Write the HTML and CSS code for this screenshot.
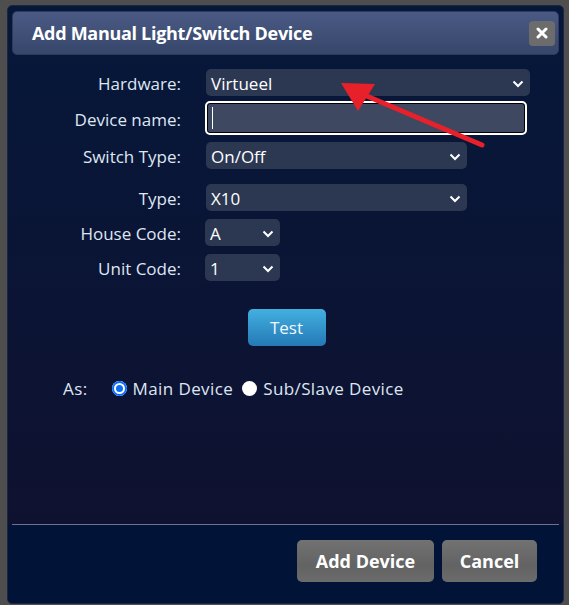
FILE: index.html
```html
<!DOCTYPE html>
<html>
<head>
<meta charset="utf-8">
<link rel="stylesheet" href="styles.css">
</head>
<body>
<div class="dialog">
  <div class="titlebar">
    <span class="title">Add Manual Light/Switch Device</span>
    <span class="close"><svg width="12" height="12" viewBox="0 0 12 12"><path d="M2 2 L10 10 M10 2 L2 10" stroke="#fff" stroke-width="3" stroke-linecap="round"/></svg></span>
  </div>
  <div class="content">
    <div class="form">
      <label class="lbl">Hardware:</label>
      <div class="select wide"><span>Virtueel</span><svg class="chev" width="12" height="8" viewBox="0 0 12 8"><path d="M1.5 1.5 L6 6 L10.5 1.5" fill="none" stroke="#fff" stroke-width="2"/></svg></div>
      <label class="lbl namelbl">Device name:</label>
      <div class="input"><span class="caret"></span></div>
      <label class="lbl">Switch Type:</label>
      <div class="select mid"><span>On/Off</span><svg class="chev" width="12" height="8" viewBox="0 0 12 8"><path d="M1.5 1.5 L6 6 L10.5 1.5" fill="none" stroke="#fff" stroke-width="2"/></svg></div>
      <label class="lbl gap">Type:</label>
      <div class="select mid gap"><span>X10</span><svg class="chev" width="12" height="8" viewBox="0 0 12 8"><path d="M1.5 1.5 L6 6 L10.5 1.5" fill="none" stroke="#fff" stroke-width="2"/></svg></div>
      <label class="lbl">House Code:</label>
      <div class="select small"><span>A</span><svg class="chev" width="12" height="8" viewBox="0 0 12 8"><path d="M1.5 1.5 L6 6 L10.5 1.5" fill="none" stroke="#fff" stroke-width="2"/></svg></div>
      <label class="lbl">Unit Code:</label>
      <div class="select small"><span>1</span><svg class="chev" width="12" height="8" viewBox="0 0 12 8"><path d="M1.5 1.5 L6 6 L10.5 1.5" fill="none" stroke="#fff" stroke-width="2"/></svg></div>
    </div>
    <div class="testrow"><button class="test">Test</button></div>
    <div class="asrow">
      <span class="as">As:</span>
      <span class="radio checked"></span><span class="rlabel">Main Device</span>
      <span class="radio"></span><span class="rlabel">Sub/Slave Device</span>
    </div>
  </div>
  <div class="footer">
    <button class="btn add">Add Device</button>
    <button class="btn cancel">Cancel</button>
  </div>
</div>
<svg class="arrow" width="569" height="605" viewBox="0 0 569 605">
  <line x1="482" y1="145" x2="362" y2="94" stroke="#e8202a" stroke-width="5" stroke-linecap="round"/>
  <polygon points="341,83 375,84 358,111" fill="#e8202a"/>
</svg>
</body>
</html>
```

FILE: styles.css
```css
html, body {
  margin: 0;
  padding: 0;
}
body {
  background: #4e4e4e;
  width: 569px;
  height: 605px;
  padding: 5px 5px 0 7px;
  box-sizing: border-box;
  font-family: "Open Sans", "Noto Sans", sans-serif;
  position: relative;
  overflow: hidden;
}
.dialog {
  width: 557px;
  height: 599px;
  box-sizing: border-box;
  border: 1px solid #1c2642;
  border-radius: 5px;
  background: linear-gradient(#06183a, #0f1130 88%);
  padding: 5px 4px 0 4px;
  display: flex;
  flex-direction: column;
}
.titlebar {
  height: 44px;
  border-radius: 5px;
  background: linear-gradient(#4a5a84, #3c4c72 70%, #37466a);
  border: 1px solid #2e3b5c;
  box-sizing: border-box;
  display: flex;
  align-items: center;
  justify-content: space-between;
  padding: 0 3px 0 19px;
}
.title {
  color: #fff;
  font-weight: 700;
  font-size: 18px;
  letter-spacing: -0.3px;
}
.close {
  width: 26px;
  height: 25px;
  background: #6c6c6c;
  border-radius: 4px;
  display: flex;
  align-items: center;
  justify-content: center;
}
.content {
  flex: 1;
  display: flex;
  flex-direction: column;
  border-bottom: 1px solid #6c7290;
}
.form {
  display: grid;
  grid-template-columns: 169px auto;
  column-gap: 24px;
  row-gap: 8px;
  margin-top: 14px;
  align-items: center;
  justify-items: start;
}
.lbl {
  justify-self: end;
  color: #dfe6f2;
  font-size: 17px;
  padding-top: 2px;
}
.gap {
  margin-top: 7px;
}
.select {
  height: 27px;
  background: #2c3852;
  border-radius: 5px;
  color: #fff;
  font-size: 17px;
  display: flex;
  align-items: center;
  justify-content: space-between;
  padding: 2px 6px 0 5px;
  box-sizing: border-box;
  margin-left: 1px;
}
.wide { width: 324px; }
.mid { width: 261px; }
.small { width: 75px; margin-left: 0; }
.input {
  width: 322px;
  height: 34px;
  box-sizing: border-box;
  background: #3e4860;
  border: 2px solid #fff;
  box-shadow: inset 0 0 0 1px #000;
  border-radius: 5px;
  display: flex;
  align-items: center;
  padding-left: 5px;
  margin: -3px 0 -1px;
}
.namelbl {
  margin: -3px 0 -1px;
}
.caret {
  width: 1px;
  height: 22px;
  background: #fff;
}
.testrow {
  display: flex;
  justify-content: center;
  margin-top: 28px;
  padding-left: 2px;
}
.test {
  width: 78px;
  height: 37px;
  border: none;
  border-radius: 5px;
  background: linear-gradient(#43b0e0, #2479b6);
  color: #f2f7ff;
  font-family: inherit;
  font-size: 17px;
}
.asrow {
  display: flex;
  align-items: center;
  margin-top: 31px;
  padding-left: 51px;
  color: #dfe6f2;
  font-size: 17px;
  letter-spacing: 0.4px;
}
.as {
  margin-right: 24px;
}
.radio {
  width: 15px;
  height: 15px;
  box-sizing: border-box;
  border-radius: 50%;
  background: #fff;
  margin-right: 6px;
}
.radio.checked {
  background: #0b6cf7;
  box-shadow: inset 0 0 0 2px #0b6cf7, inset 0 0 0 4px #fff;
}
.rlabel {
  margin-right: 9px;
}
.footer {
  height: 78px;
  background: #011438;
  display: flex;
  justify-content: flex-end;
  align-items: flex-start;
  gap: 8px;
  padding: 15px 26px 0 0;
  box-sizing: border-box;
  margin: 0 -4px;
  border-radius: 0 0 5px 5px;
}
.btn {
  height: 42px;
  border: none;
  border-radius: 5px;
  background: linear-gradient(#727272, #636363 60%, #6b6b6b);
  color: #fff;
  font-family: inherit;
  font-weight: 700;
  font-size: 18px;
  padding: 0;
}
.add { width: 137px; }
.cancel { width: 95px; }
.arrow {
  position: absolute;
  left: 0;
  top: 0;
  pointer-events: none;
}
```
